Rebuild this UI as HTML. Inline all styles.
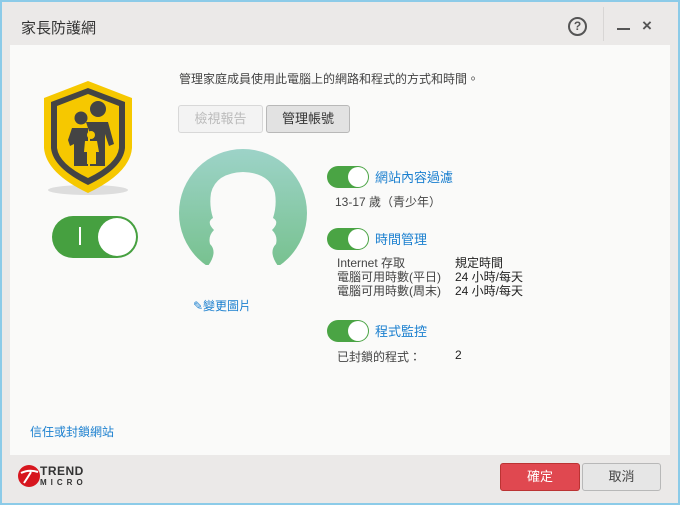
<!DOCTYPE html>
<html><head><meta charset="utf-8"><style>
*{margin:0;padding:0;box-sizing:border-box}
body{width:680px;height:505px;overflow:hidden;background:#8ccbe8;font-family:"Liberation Sans","Noto Sans CJK TC",sans-serif;color:#444}
#win{position:absolute;left:2px;top:2px;width:676px;height:501px;background:#ebe9e8}
#panel{position:absolute;left:8px;top:43px;width:660px;height:410px;background:#fafaf9}
.a{position:absolute;white-space:nowrap}
.tg{position:absolute;width:42px;height:22px;border-radius:11px;background:#4aa444}
.tg::after{content:"";position:absolute;right:1px;top:1px;width:20px;height:20px;border-radius:50%;background:#fff}
.blue{color:#1a7fcf;font-size:13px}
.sm{font-size:12px;color:#444}
.btn{position:absolute;height:28px;border:1px solid #b8b8b8;border-radius:3px;font-size:13px;text-align:center;line-height:26px}
</style></head><body>
<div id="win">
<div class="a" style="left:19px;top:15px;font-size:15px;color:#333">家長防護網</div>
<div class="a" style="left:566px;top:15px;width:19px;height:19px;border:2px solid #555;border-radius:50%;font-size:12px;font-weight:bold;text-align:center;line-height:15px;color:#555">?</div>
<div class="a" style="left:601px;top:5px;width:1px;height:34px;background:#d8d6d5"></div>
<div class="a" style="left:615px;top:26px;width:13px;height:2px;background:#555"></div>
<div class="a" style="left:640px;top:14px;font-size:17px;font-weight:bold;color:#555">×</div>
<div id="panel"></div>
<svg class="a" style="left:40px;top:76px" width="92" height="118" viewBox="0 0 92 118">
<ellipse cx="46" cy="112" rx="40" ry="5" fill="#ddd"/>
<path d="M46 3 L90 20 L90 70 Q88 95 46 115 Q4 95 2 70 L2 20 Z" fill="#f6c800"/>
<path d="M46 10 L83 24 L83 70 Q81 90 46 107 Q11 90 9 70 L9 24 Z" fill="#444"/>
<path d="M46 16 L77 28 L77 70 Q75 86 46 100 Q17 86 15 70 L15 28 Z" fill="#f6c800"/>
<circle cx="56" cy="31" r="8" fill="#444"/><circle cx="39" cy="40" r="6.5" fill="#444"/>
<path d="M44 44 L66 44 L72 66 L67 68 L63 56 L63 88 L48 88 L48 56 Z M30 50 L46 50 L46 88 L32 88 L32 66 L28 68 L26 62 Z" fill="#444"/>
<circle cx="49" cy="57" r="4" fill="#f6c800"/>
<path d="M43 63 L55 63 L57 74 L54 74 L54 86 L45 86 L45 74 L42 74 Z" fill="#f6c800"/>
</svg>
<div class="a" style="left:50px;top:214px;width:86px;height:42px;border-radius:21px;background:#46a040"></div>
<div class="a" style="left:96px;top:216px;width:38px;height:38px;border-radius:50%;background:#fff"></div>
<div class="a" style="left:77px;top:225px;width:2px;height:18px;background:#fff"></div>
<div class="a sm" style="left:177px;top:68px">管理家庭成員使用此電腦上的網路和程式的方式和時間。</div>
<div class="btn" style="left:176px;top:103px;width:85px;color:#bbb;border-color:#d8d8d8;background:#f3f3f3">檢視報告</div>
<div class="btn" style="left:264px;top:103px;width:84px;background:#e2e2e2;color:#333">管理帳號</div>
<svg class="a" style="left:176px;top:146px" width="130" height="120" viewBox="0 0 130 120">
<defs><linearGradient id="g" x1="0" y1="0" x2="0" y2="1"><stop offset="0" stop-color="#9dd3c8"/><stop offset="1" stop-color="#74c08a"/></linearGradient></defs>
<circle cx="65" cy="65" r="64" fill="url(#g)"/>
<rect x="0" y="117" width="130" height="5" fill="#fafaf9"/>
<path d="M65 24 Q38 25 33 45 Q31 58 35 70 Q28 74 36 82 Q30 88 32 96 Q40 104 30 118 L100 118 Q90 104 98 96 Q100 88 94 82 Q102 74 95 70 Q99 58 97 45 Q92 25 65 24 Z" fill="#fafaf9"/>
</svg>
<div class="a blue" style="left:191px;top:295px;font-size:12px">✎變更圖片</div>
<div class="tg" style="left:325px;top:164px"></div>
<div class="a blue" style="left:373px;top:165px">網站內容過濾</div>
<div class="a sm" style="left:333px;top:191px">13-17 歲（青少年）</div>
<div class="tg" style="left:325px;top:226px"></div>
<div class="a blue" style="left:373px;top:227px">時間管理</div>
<div class="a sm" style="left:335px;top:254px;line-height:14px">Internet 存取<br>電腦可用時數(平日)<br>電腦可用時數(周末)</div>
<div class="a sm" style="left:453px;top:254px;line-height:14px;color:#222">規定時間<br>24 小時/每天<br>24 小時/每天</div>
<div class="tg" style="left:325px;top:318px"></div>
<div class="a blue" style="left:373px;top:319px">程式監控</div>
<div class="a sm" style="left:335px;top:346px">已封鎖的程式：</div>
<div class="a sm" style="left:453px;top:346px;color:#222">2</div>
<div class="a blue" style="left:28px;top:421px;font-size:12px">信任或封鎖網站</div>
<svg class="a" style="left:16px;top:461px" width="22" height="26" viewBox="0 0 22 26"><circle cx="11" cy="13" r="11" fill="#d7161e"/><path d="M3 10 Q11 6 20 9 M6 20 Q10 14 13 9" stroke="#fff" stroke-width="2" fill="none"/></svg>
<div class="a" style="left:38px;top:462px;font-size:12px;font-weight:bold;color:#333;letter-spacing:0.5px">TREND</div>
<div class="a" style="left:38px;top:476px;font-size:8px;font-weight:bold;color:#333;letter-spacing:4px">MICRO</div>
<div class="btn" style="left:498px;top:461px;width:80px;background:#e04850;border-color:#b33;color:#fff">確定</div>
<div class="btn" style="left:580px;top:461px;width:79px;background:#e6e6e6;color:#444">取消</div>
</div>
</body></html>
